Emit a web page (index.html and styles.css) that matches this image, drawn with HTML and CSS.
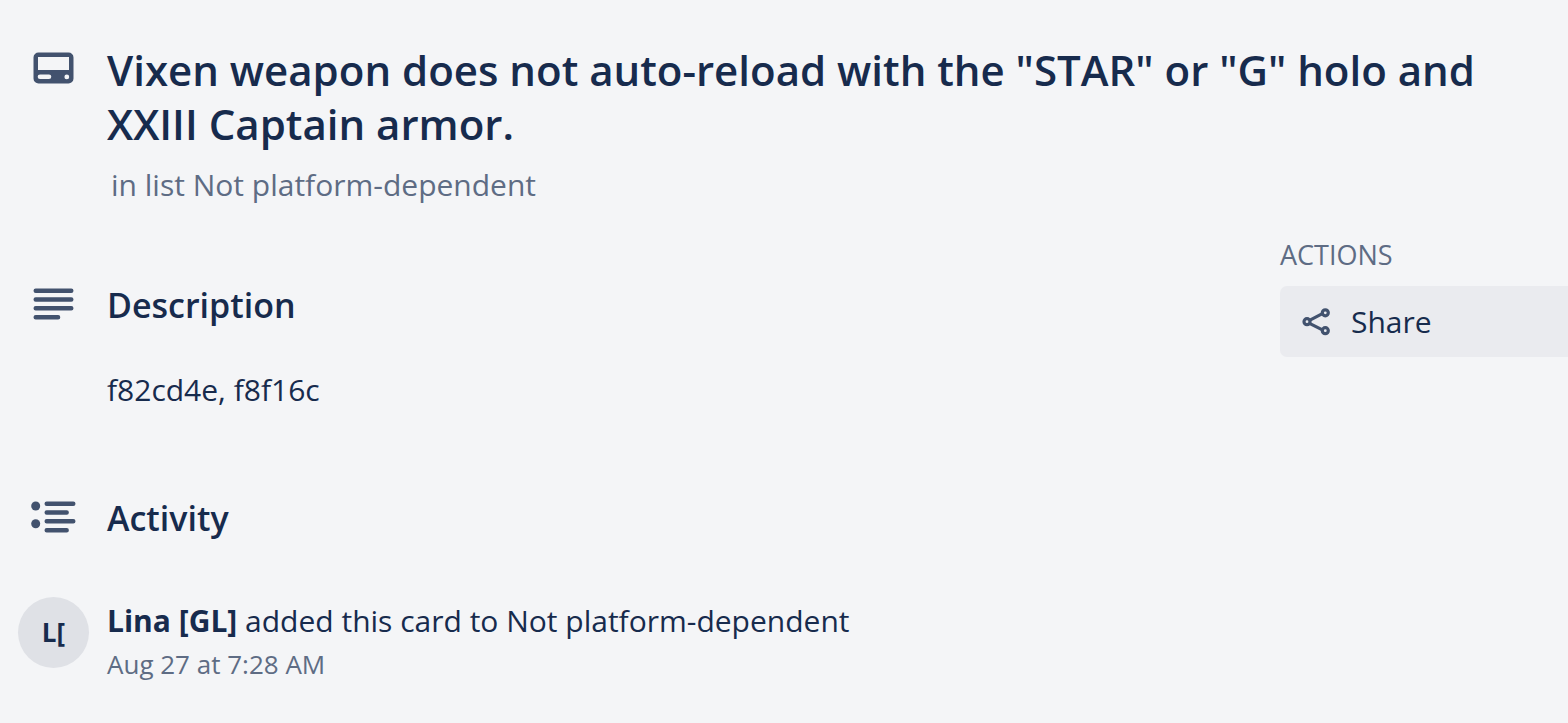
FILE: index.html
```html
<!DOCTYPE html>
<html lang="en">
<head>
    <meta charset="UTF-8">
    <meta name="viewport" content="width=device-width, initial-scale=1.0">
    <title>Card details</title>
    <link rel="stylesheet" href="styles.css">
</head>
<body>
    <main class="card">
        <header class="row card-header">
            <div class="row-icon">
                <svg width="41" height="32" viewBox="0 0 41 32" aria-hidden="true">
                    <path fill="currentColor" fill-rule="evenodd" d="M5.500 0.500h30a5 5 0 0 1 5 5v21a5 5 0 0 1-5 5h-30a5 5 0 0 1-5-5v-21a5 5 0 0 1 5-5zM5 5v13h31V5zM7 22.500a2.300 2.300 0 0 0 0 4.600h9a2.300 2.300 0 0 0 0-4.600zM33.800 22.500a2.400 2.400 0 1 0 0 4.800a2.400 2.400 0 0 0 0-4.800z"/>
                </svg>
            </div>
            <div class="row-content">
                <h1>Vixen weapon does not auto-reload with the "STAR" or "G" holo and XXIII Captain armor.</h1>
                <p class="list-name">in list Not platform-dependent</p>
            </div>
        </header>

        <div class="columns">
            <div class="card-main">
                <section class="description">
                    <div class="row">
                        <div class="row-icon">
                            <svg width="41" height="32" viewBox="0 0 41 32" aria-hidden="true">
                                <path fill="none" stroke="currentColor" stroke-width="4.400" stroke-linecap="round" d="M2.700 2.700h35.600M2.700 11.500h35.600M2.700 20.300h35.600M2.700 29.200h22.400"/>
                            </svg>
                        </div>
                        <h2>Description</h2>
                    </div>
                    <p class="description-text">f82cd4e, f8f16c</p>
                </section>

                <section class="activity">
                    <div class="row">
                        <div class="row-icon">
                            <svg width="47" height="32" viewBox="0 0 47 32" aria-hidden="true">
                                <path fill="none" stroke="currentColor" stroke-width="4.400" stroke-linecap="round" d="M16.700 2.700h26.600M16.700 11.500h20M16.700 20.300h26.600M16.700 29.200h20"/>
                                <circle cx="5.700" cy="5" r="4.500" fill="currentColor"/>
                                <circle cx="5.700" cy="22.700" r="4.500" fill="currentColor"/>
                            </svg>
                        </div>
                        <h2>Activity</h2>
                    </div>
                    <div class="row entry">
                        <div class="avatar">L[</div>
                        <div class="row-content">
                            <p class="entry-text"><strong>Lina [GL]</strong> added this card to Not platform-dependent</p>
                            <p class="entry-date">Aug 27 at 7:28 AM</p>
                        </div>
                    </div>
                </section>
            </div>

            <aside class="sidebar">
                <h3>ACTIONS</h3>
                <button type="button" class="share-btn">
                    <svg width="28" height="28" viewBox="0 0 28 28" aria-hidden="true">
                        <g fill="none" stroke="currentColor" stroke-width="3.200">
                            <path d="M7.500 12.300l12.400-6.400M7.500 15.300l12.400 6.400"/>
                            <circle cx="5" cy="13.700" r="3"/>
                            <circle cx="23.300" cy="4.800" r="3"/>
                            <circle cx="23.300" cy="22.700" r="3"/>
                        </g>
                    </svg>
                    Share
                </button>
            </aside>
        </div>
    </main>
</body>
</html>
```
FILE: styles.css
```css
body {
    margin: 0;
    background: #f4f5f7;
    color: #172b4d;
    font-family: "Segoe UI", "Open Sans", sans-serif;
    font-size: 30px;
    line-height: 44px;
}
h1, h2, h3, p {
    margin: 0;
}
.card {
    padding: 43px 0 40px 18px;
}
.row {
    display: flex;
    gap: 18px;
}
.row-icon {
    flex: 0 0 71px;
    display: flex;
    justify-content: center;
    align-items: flex-start;
    padding-top: 5px;
    color: #42526e;
}
.row-content {
    flex: 1;
    min-width: 0;
}
.card-header {
    padding-right: 60px;
}
.card-header .row-icon {
    padding-top: 9px;
}
h1 {
    font-size: 42px;
    font-weight: 600;
    line-height: 54px;
}
h2 {
    font-size: 34px;
    font-weight: 600;
}
.list-name {
    margin-top: 12px;
    padding-left: 4px;
    color: #5e6c84;
}
.columns {
    display: flex;
    gap: 36px;
    padding-top: 30px;
}
.card-main {
    flex: 1;
    min-width: 0;
    padding-top: 46px;
}
.description-text {
    margin: 41px 0 84px 89px;
}
.entry {
    margin-top: 57px;
}
.entry .row-content {
    padding-top: 2px;
}
.avatar {
    flex: 0 0 71px;
    height: 71px;
    border-radius: 50%;
    background: #dfe1e6;
    font-size: 26px;
    font-weight: 700;
    line-height: 71px;
    text-align: center;
}
.entry-date {
    color: #5e6c84;
    font-size: 26px;
    line-height: 42px;
}
.sidebar {
    flex: 0 0 288px;
}
h3 {
    color: #5e6c84;
    font-size: 27px;
    font-weight: 400;
    line-height: 36px;
}
.share-btn {
    display: flex;
    align-items: center;
    gap: 21px;
    width: 100%;
    height: 71px;
    margin-top: 13px;
    padding: 0 22px;
    border: none;
    border-radius: 7px 0 0 7px;
    background: #eaebef;
    color: inherit;
    font: inherit;
    cursor: pointer;
}
.share-btn:hover {
    background: #dfe1e6;
}
.share-btn svg {
    color: #42526e;
}
```
